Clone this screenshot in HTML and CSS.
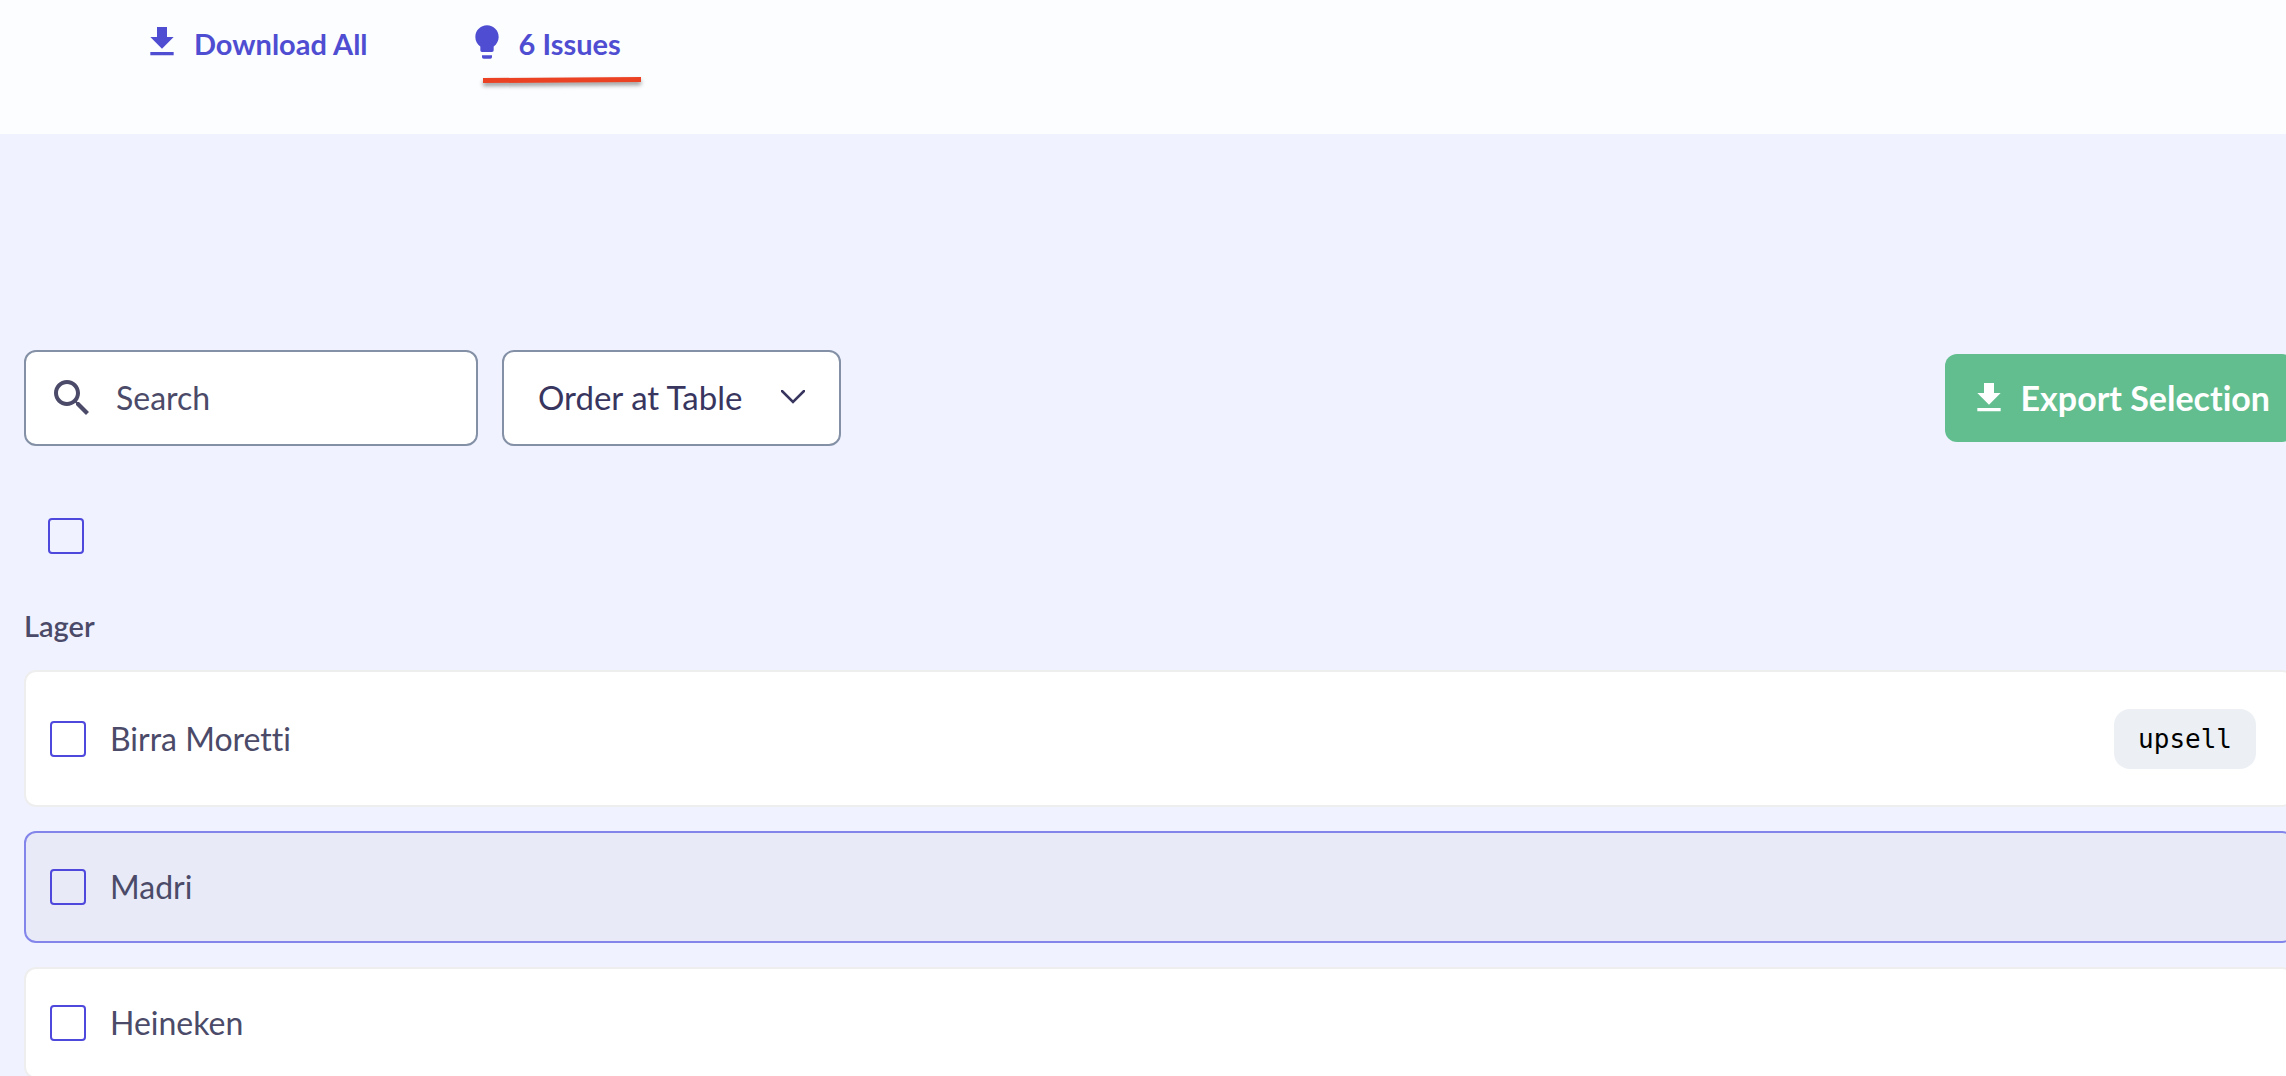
FILE: index.html
```html
<!DOCTYPE html>
<html lang="en">
<head>
<meta charset="utf-8">
<title>Menu items</title>
<link rel="stylesheet" href="styles.css">
</head>
<body>
<svg class="defs" aria-hidden="true">
  <symbol id="download" viewBox="0 0 24 24"><path d="M19 9h-4V3H9v6H5l7 7 7-7zM5 18v2h14v-2H5z"/></symbol>
</svg>
<header class="topbar">
  <button class="action" type="button"><svg class="icon"><use href="#download"/></svg>Download All</button>
  <button class="action" type="button">
    <svg class="icon" viewBox="0 0 24 24"><path d="M9 21c0 .5.4 1 1 1h4c.6 0 1-.5 1-1v-1H9v1zm3-19C8.1 2 5 5.1 5 9c0 2.4 1.2 4.500 3 5.700V17c0 .5.4 1 1 1h6c.6 0 1-.5 1-1v-2.300c1.800-1.300 3-3.400 3-5.700 0-3.900-3.100-7-7-7z"/></svg>6 Issues
    <svg class="mark" viewBox="0 0 158 8"><path d="M0 1L158 0V5L0 6Z"/></svg>
  </button>
</header>
<main class="content">
  <div class="toolbar">
    <label class="search">
      <svg class="search-icon" viewBox="0 0 24 24"><path d="M15.500 14h-.79l-.28-.27C15.410 12.590 16 11.110 16 9.500 16 5.910 13.090 3 9.500 3S3 5.910 3 9.500 5.910 16 9.500 16c1.610 0 3.090-.59 4.230-1.570l.27.28v.79l5 4.990L20.490 19l-4.990-5zm-6 0C7.010 14 5 11.990 5 9.500S7.010 5 9.500 5 14 7.010 14 9.500 11.990 14 9.500 14z"/></svg>
      <input type="text" placeholder="Search" aria-label="Search">
    </label>
    <div class="picker">
      <select aria-label="Menu"><option>Order at Table</option></select>
      <svg class="chevron" viewBox="0 0 24 14"><path d="M1 1L12 12L23 1"/></svg>
    </div>
    <button class="export" type="button"><svg class="icon"><use href="#download"/></svg>Export Selection</button>
  </div>
  <div class="select-all"><input type="checkbox" class="check" aria-label="Select all"></div>
  <h2 class="group">Lager</h2>
  <ul class="items">
    <li><label class="item tall"><input type="checkbox" class="check"><span>Birra Moretti</span><code class="tag">upsell</code></label></li>
    <li><label class="item active"><input type="checkbox" class="check"><span>Madri</span></label></li>
    <li><label class="item"><input type="checkbox" class="check"><span>Heineken</span></label></li>
  </ul>
</main>
</body>
</html>
```
FILE: styles.css
```css
* { box-sizing: border-box; }
body {
  margin: 0;
  background: #f0f3ff;
  color: #4b4a68;
  font: 32px/40px Lato, "Open Sans", sans-serif;
  font-variant-ligatures: none;
  overflow-x: hidden;
}
button, input, select { font: inherit; font-variant-ligatures: none; color: inherit; margin: 0; }
button { border: 0; background: none; cursor: pointer; }
.defs { position: absolute; width: 0; height: 0; }
.icon { width: 40px; height: 40px; fill: currentColor; flex: none; }

.topbar {
  display: flex;
  gap: 99px;
  min-height: 134px;
  padding: 22px 142px;
  align-items: flex-start;
  background: #fbfdfe;
}
.action {
  position: relative;
  display: flex;
  align-items: flex-start;
  gap: 12px;
  padding: 0;
  color: #4f4dd2;
  font-size: 29px;
  font-weight: 700;
  line-height: 44px;
}
.mark {
  position: absolute;
  left: 16px;
  top: 55px;
  width: 158px;
  height: 8px;
  overflow: visible;
  fill: #ec4224;
  filter: drop-shadow(0 3px 2px rgba(0, 0, 0, .4));
}

/* The list runs slightly past the right edge of the window. */
.content { margin-right: -8px; padding: 216px 0 0 24px; }
.toolbar { display: flex; align-items: center; gap: 24px; }
.search {
  display: flex;
  align-items: center;
  gap: 20px;
  width: 454px;
  height: 96px;
  padding: 0 22px;
  border: 2px solid #8490a6;
  border-radius: 12px;
  background: #fff;
}
.search-icon { width: 48px; height: 48px; fill: #4b4a68; flex: none; }
.search input { width: 100%; min-width: 0; padding: 0; border: 0; outline: 0; background: none; }
.search input::placeholder { color: #4b4a68; opacity: 1; }
.picker { position: relative; }
.picker select {
  appearance: none;
  width: 339px;
  height: 96px;
  padding: 0 68px 2px 34px;
  border: 2px solid #8490a6;
  border-radius: 12px;
  background: #fff;
  color: #38355f;
  font-size: 33px;
}
.chevron {
  position: absolute;
  right: 36px;
  top: 40px;
  width: 24px;
  height: 14px;
  fill: none;
  stroke: #38355f;
  stroke-width: 2.500;
  stroke-linecap: round;
  pointer-events: none;
}
.export {
  display: flex;
  align-items: center;
  gap: 12px;
  height: 88px;
  margin-left: auto;
  padding: 0 24px;
  border-radius: 12px;
  background: #62be8f;
  color: #fff;
  font-size: 34px;
  font-weight: 700;
}

.check {
  appearance: none;
  flex: none;
  width: 36px;
  height: 36px;
  border: 2px solid #4f48dc;
  border-radius: 4px;
}
.check:checked { background: #4f48dc; }
.select-all { display: flex; padding: 72px 24px 52px; }
.group { margin: 0 0 24px; font-size: 29px; line-height: 40px; font-weight: 600; }
.items { display: flex; flex-direction: column; gap: 24px; margin: 0; padding: 0; list-style: none; }
.item {
  display: flex;
  align-items: center;
  gap: 24px;
  min-height: 112px;
  padding: 0 36px 0 24px;
  border: 2px solid #eee;
  border-radius: 12px;
  background: #fff;
}
.tall { min-height: 137px; }
.active { border-color: #8385ea; background: #e8eaf7; }
.tag {
  margin-left: auto;
  padding: 10px 24px;
  border-radius: 16px;
  background: #ecf0f4;
  color: #000;
  font: 26px/40px "DejaVu Sans Mono", monospace;
}
```
